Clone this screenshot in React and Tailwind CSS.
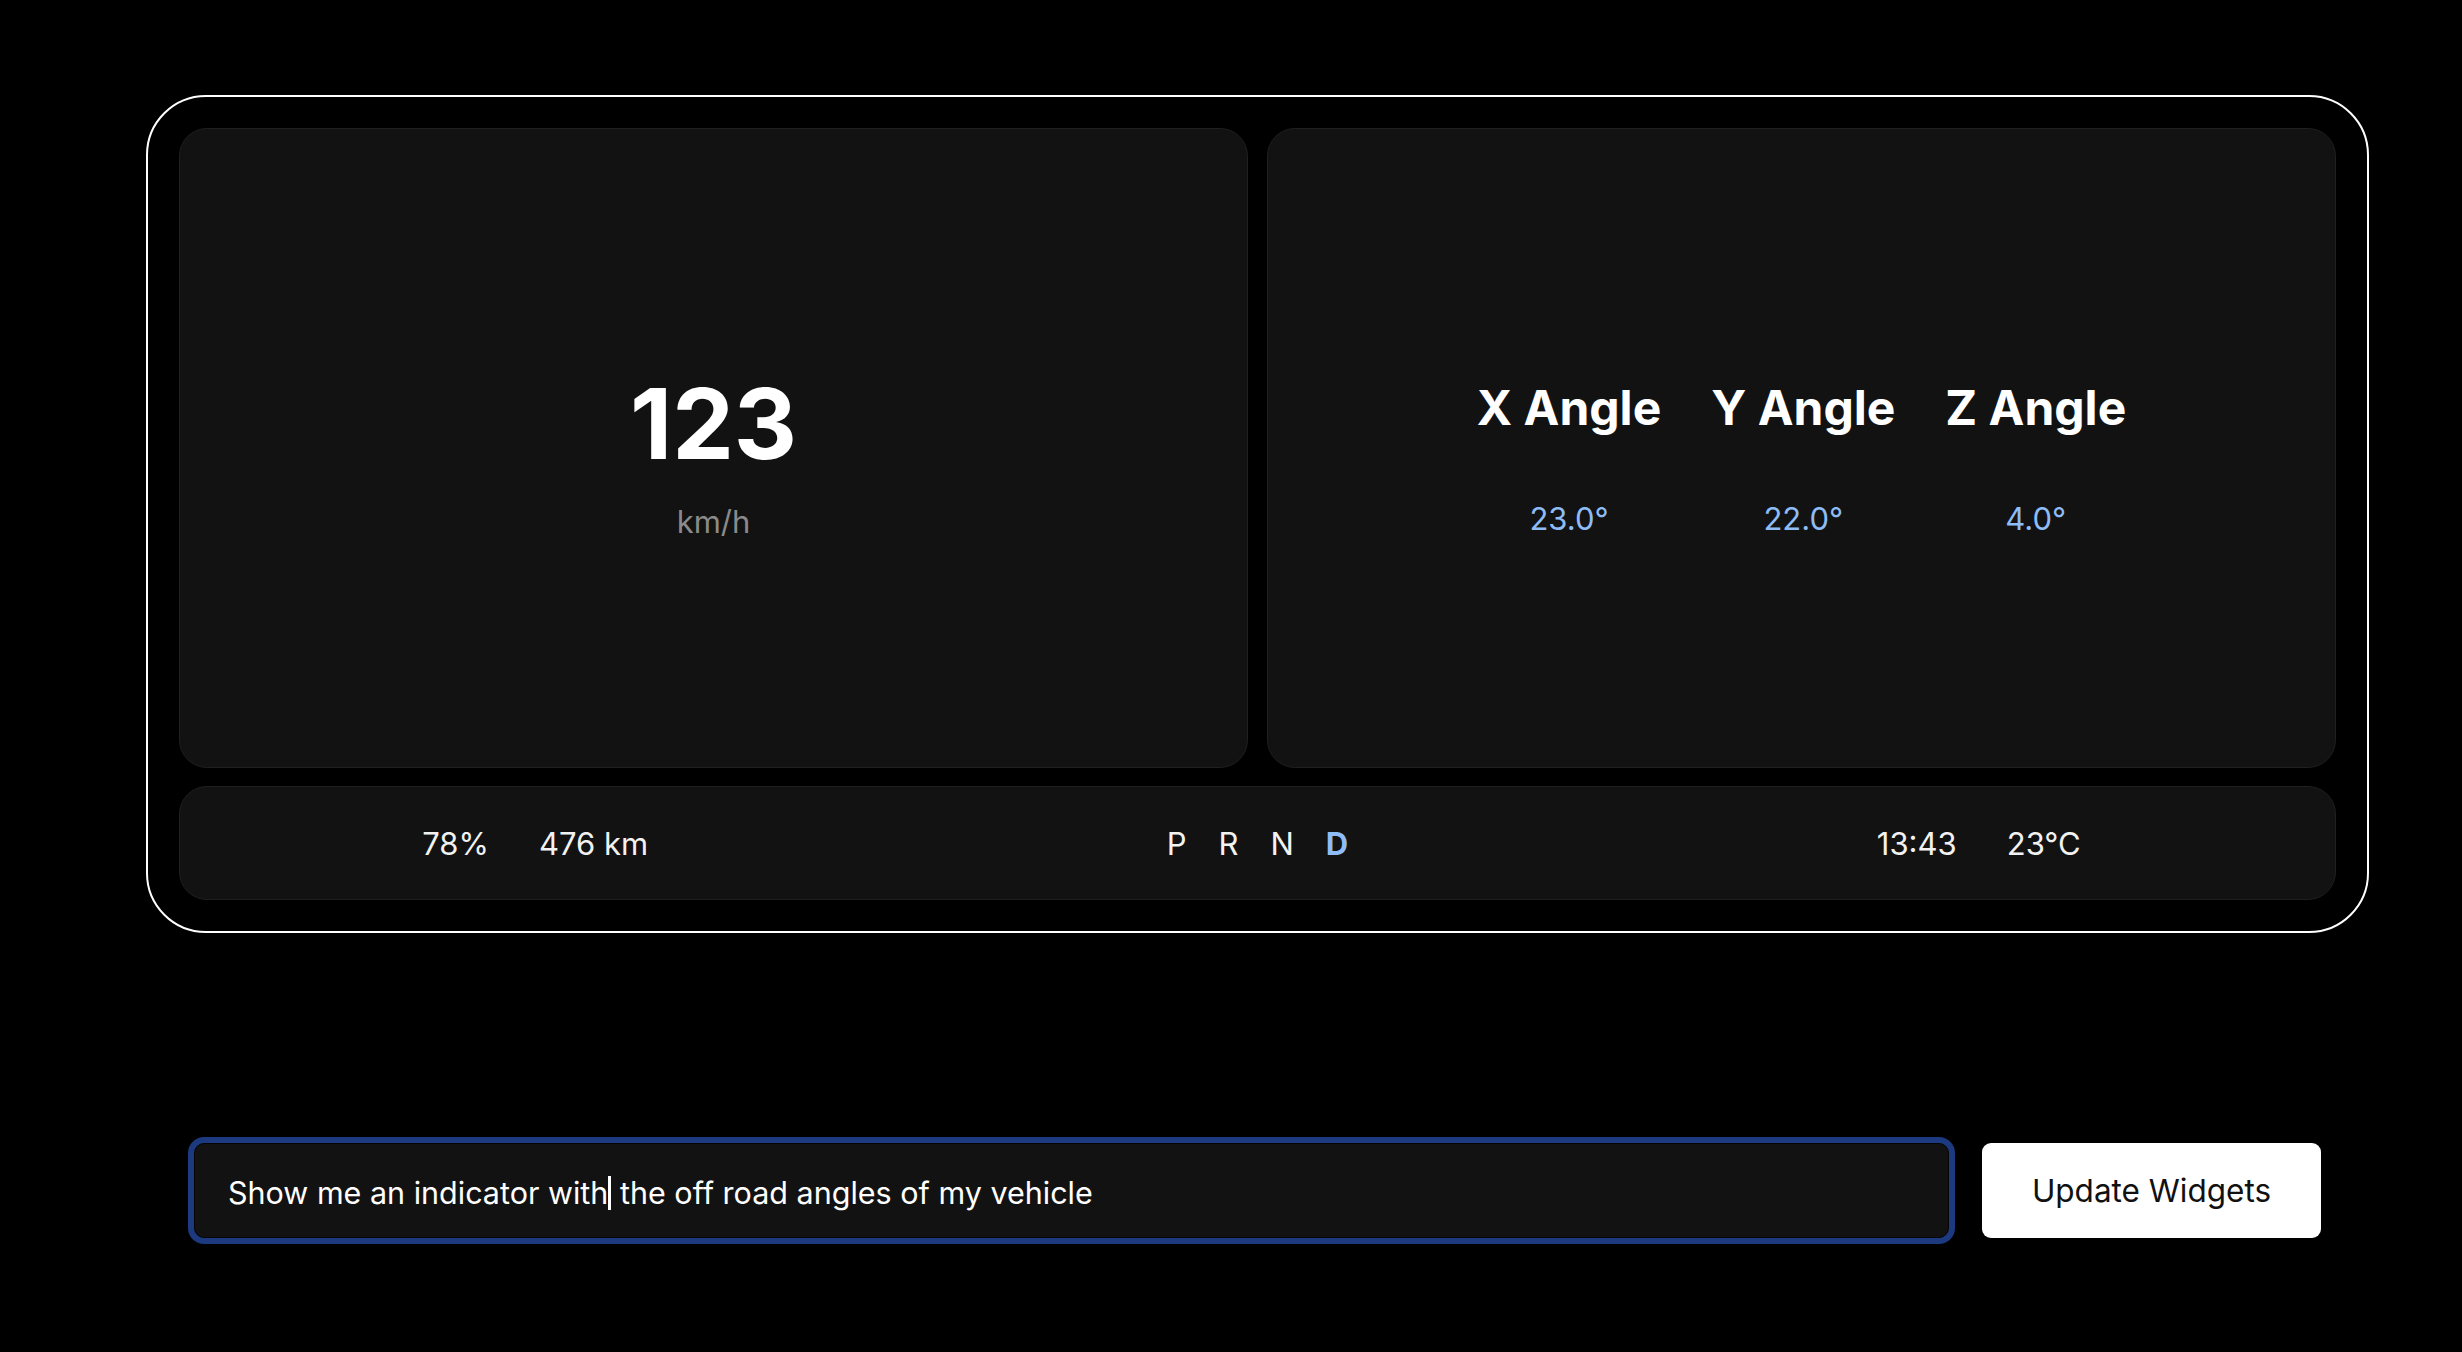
import React from 'react';

const angles = [
  { label: 'X Angle', value: '23.0°' },
  { label: 'Y Angle', value: '22.0°' },
  { label: 'Z Angle', value: '4.0°' },
];

const gears = ['P', 'R', 'N', 'D'];

export default function App() {
  const activeGear = 'D';

  return (
    <div className="min-h-screen bg-black font-['Inter',sans-serif] text-white">
      <div className="ml-[146px] w-[2223px] pt-[95px]">
        {/* dashboard frame */}
        <div className="flex flex-col gap-[18px] rounded-[60px] border-2 border-white p-[31px]">
          <div className="grid h-[640px] grid-cols-2 gap-[19px]">
            {/* speed widget */}
            <div className="flex flex-col items-center justify-center rounded-[28px] border-[1.5px] border-[#1f1f1f] bg-[#121212] pt-[23px]">
              <div className="text-[98px] font-bold leading-none">123</div>
              <div className="mt-[27px] text-[31px] leading-[1.4] text-[#8a8a8a]">km/h</div>
            </div>

            {/* off road angles widget */}
            <div className="flex items-center justify-center gap-[50px] rounded-[28px] border-[1.5px] border-[#1f1f1f] bg-[#121212] pt-[23px]">
              {angles.map((a) => (
                <div key={a.label} className="flex flex-col items-center">
                  <div className="text-[48px] font-bold leading-[1.2]">{a.label}</div>
                  <div className="mt-[60px] text-[31px] leading-[1.4] text-[#8ebcf6]">{a.value}</div>
                </div>
              ))}
            </div>
          </div>

          {/* status bar */}
          <div className="grid h-[114px] grid-cols-3 items-center rounded-[28px] border-[1.5px] border-[#1f1f1f] bg-[#121212] pt-[2px] text-[31px] text-[#f2f2f2]">
            <div className="flex justify-center gap-[50px] pr-[8px]">
              <span>78%</span>
              <span>476 km</span>
            </div>
            <div className="flex justify-center gap-[32px]">
              {gears.map((g) => (
                <span
                  key={g}
                  className={g === activeGear ? 'font-bold text-[#8ebcf6]' : ''}
                >
                  {g}
                </span>
              ))}
            </div>
            <div className="flex justify-center gap-[50px] pl-[6px]">
              <span>13:43</span>
              <span>23°C</span>
            </div>
          </div>
        </div>

        {/* prompt row */}
        <div className="mt-[210px] flex gap-[33px] px-[48px]">
          <div className="flex h-[95px] flex-1 items-center rounded-[10px] border-[1.5px] border-[#050505] bg-[#121212] px-[33px] pt-[4px] text-[30.5px] text-white shadow-[0_0_0_6px_#1d3a80]">
            <span className="whitespace-pre">Show me an indicator with</span>
            <span className="inline-block h-[34px] w-[3px] bg-white" />
            <span className="whitespace-pre"> the off road angles of my vehicle</span>
          </div>
          <button className="h-[95px] w-[339px] rounded-[9px] bg-white text-[31.5px] text-[#111]">
            Update Widgets
          </button>
        </div>
      </div>
    </div>
  );
}
